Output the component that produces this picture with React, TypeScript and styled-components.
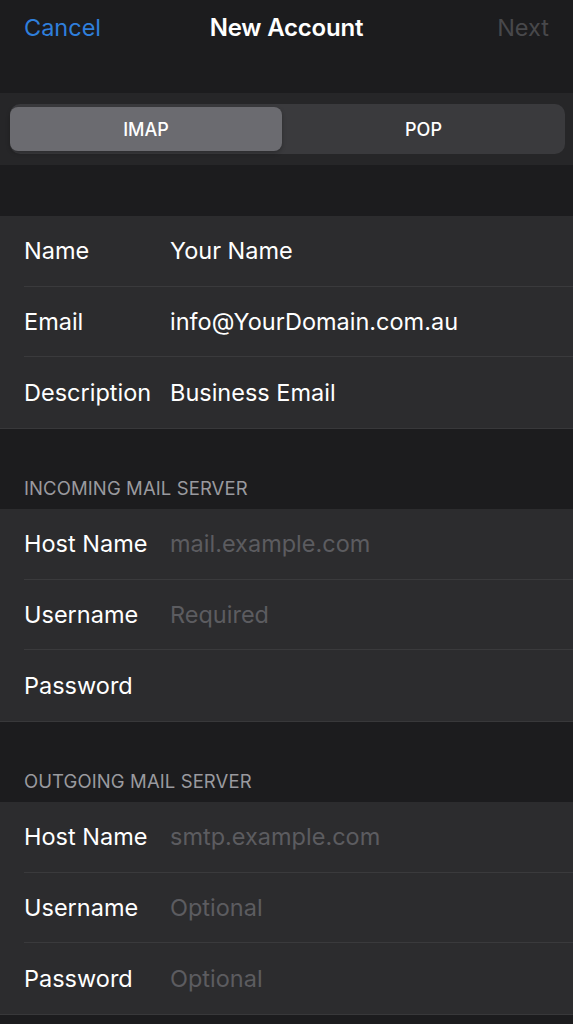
import React from "react";
import styled, { createGlobalStyle } from "styled-components";

const GlobalStyle = createGlobalStyle`
  html, body {
    margin: 0;
    padding: 0;
    background: #1c1c1e;
  }
  body {
    font-family: Inter, "Noto Sans", "Liberation Sans", sans-serif;
    -webkit-font-smoothing: antialiased;
  }
`;

const Screen = styled.div`
  width: 573px;
  min-height: 1024px;
  background: #1c1c1e;
  color: #ffffff;
  overflow: hidden;
`;

const NavBar = styled.div`
  height: 54px;
  display: grid;
  grid-template-columns: 1fr auto 1fr;
  align-items: center;
  padding: 0 24px;
`;

const NavButton = styled.span<{ $align: "left" | "right"; $muted?: boolean }>`
  font-size: 23.5px;
  justify-self: ${(p) => (p.$align === "left" ? "start" : "end")};
  color: ${(p) => (p.$muted ? "#48484b" : "#2f7fdc")};
`;

const NavTitle = styled.span`
  font-size: 24px;
  font-weight: 600;
  letter-spacing: -0.2px;
`;

const SegmentBand = styled.div`
  margin-top: 39px;
  height: 72px;
  background: #262628;
  display: flex;
  align-items: center;
  padding: 0 8px 0 10px;
`;

const Segmented = styled.div`
  flex: 1;
  height: 50px;
  border-radius: 10px;
  background: #3a3a3d;
  display: grid;
  grid-template-columns: 272px 1fr;
  padding: 3px 0;
  box-sizing: border-box;
`;

const Segment = styled.div<{ $active?: boolean }>`
  display: flex;
  align-items: center;
  justify-content: center;
  font-size: 18px;
  font-weight: 500;
  color: #ffffff;
  border-radius: 8px;
  background: ${(p) => (p.$active ? "#6b6b70" : "transparent")};
  box-shadow: ${(p) => (p.$active ? "0 2px 4px rgba(0,0,0,0.25)" : "none")};
`;

const Spacer = styled.div<{ $h: number }>`
  height: ${(p) => p.$h}px;
`;

const SectionHeader = styled.div`
  height: 81px;
  box-sizing: border-box;
  padding: 0 24px 10px;
  display: flex;
  align-items: flex-end;
  font-size: 18.5px;
  color: #9a9a9f;
  letter-spacing: 0.1px;
`;

const Group = styled.div`
  background: #2c2c2e;
  box-shadow: 0 1px 0 #38383a;
`;

const Row = styled.div`
  height: 70.67px;
  box-sizing: border-box;
  display: flex;
  align-items: center;
  margin-left: 24px;
  border-bottom: 1px solid #3a3a3c;
  &:last-child {
    border-bottom: none;
  }
`;

const Label = styled.span`
  width: 146px;
  flex-shrink: 0;
  font-size: 23.5px;
  color: #ffffff;
  white-space: nowrap;
`;

const Value = styled.span<{ $placeholder?: boolean }>`
  font-size: 23.5px;
  color: ${(p) => (p.$placeholder ? "#5c5c60" : "#ffffff")};
  white-space: nowrap;
`;

type Field = { label: string; value?: string; placeholder?: string };

const accountFields: Field[] = [
  { label: "Name", value: "Your Name" },
  { label: "Email", value: "info@YourDomain.com.au" },
  { label: "Description", value: "Business Email" },
];

const incomingFields: Field[] = [
  { label: "Host Name", placeholder: "mail.example.com" },
  { label: "Username", placeholder: "Required" },
  { label: "Password" },
];

const outgoingFields: Field[] = [
  { label: "Host Name", placeholder: "smtp.example.com" },
  { label: "Username", placeholder: "Optional" },
  { label: "Password", placeholder: "Optional" },
];

function FieldGroup({ fields }: { fields: Field[] }) {
  return (
    <Group>
      {fields.map((f) => (
        <Row key={f.label}>
          <Label>{f.label}</Label>
          {f.value ? (
            <Value>{f.value}</Value>
          ) : f.placeholder ? (
            <Value $placeholder>{f.placeholder}</Value>
          ) : null}
        </Row>
      ))}
    </Group>
  );
}

export default function App() {
  return (
    <Screen>
      <GlobalStyle />
      <NavBar>
        <NavButton $align="left">Cancel</NavButton>
        <NavTitle>New Account</NavTitle>
        <NavButton $align="right" $muted>
          Next
        </NavButton>
      </NavBar>
      <SegmentBand>
        <Segmented>
          <Segment $active>IMAP</Segment>
          <Segment>POP</Segment>
        </Segmented>
      </SegmentBand>
      <Spacer $h={51} />
      <FieldGroup fields={accountFields} />
      <SectionHeader>INCOMING MAIL SERVER</SectionHeader>
      <FieldGroup fields={incomingFields} />
      <SectionHeader>OUTGOING MAIL SERVER</SectionHeader>
      <FieldGroup fields={outgoingFields} />
    </Screen>
  );
}
